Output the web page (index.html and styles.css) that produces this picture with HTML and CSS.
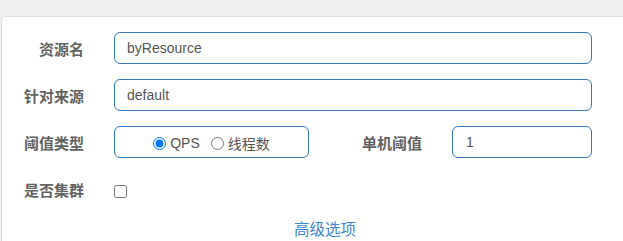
FILE: index.html
```html
<!DOCTYPE html>
<html lang="zh">
<head>
<meta charset="utf-8">
<title>流控规则</title>
<link rel="stylesheet" href="styles.css">
</head>
<body>
<div class="panel">
  <form class="form">
    <div class="row">
      <label class="label">资源名</label>
      <input class="field field-wide" type="text" value="byResource">
    </div>
    <div class="row">
      <label class="label">针对来源</label>
      <input class="field field-wide" type="text" value="default">
    </div>
    <div class="row">
      <label class="label">阈值类型</label>
      <div class="radio-box">
        <label class="radio"><input type="radio" name="grade" checked><span>QPS</span></label>
        <label class="radio"><input type="radio" name="grade"><span>线程数</span></label>
      </div>
      <label class="label label-mid">单机阈值</label>
      <input class="field field-small" type="text" value="1">
    </div>
    <div class="row row-check">
      <label class="label">是否集群</label>
      <input class="check" type="checkbox">
    </div>
    <div class="more"><a class="more-link">高级选项</a></div>
  </form>
</div>
</body>
</html>
```

FILE: styles.css
```css
html, body {
  margin: 0;
  padding: 0;
  height: 100%;
  overflow: hidden;
}
body {
  background: #f0f0f0;
  font-family: "Liberation Sans", Arial, "Noto Sans CJK SC", sans-serif;
}
.panel {
  box-sizing: border-box;
  margin: 16px 0 0 1px;
  background: #fff;
  border-top: 1px solid #dcdcdc;
  border-left: 1px solid #dcdcdc;
  border-top-left-radius: 5px;
  height: calc(100% - 16px);
}
.form {
  padding-top: 15px;
}
.row {
  display: flex;
  align-items: flex-start;
  margin-bottom: 15px;
}
.label {
  width: 82px;
  flex: none;
  text-align: right;
  font-size: 15px;
  line-height: 20px;
  padding-top: 8px;
  font-weight: bold;
  color: #626262;
  font-family: "Liberation Sans", "Noto Sans CJK SC", sans-serif;
}
.field {
  box-sizing: border-box;
  height: 32px;
  border: 1px solid #3477b7;
  border-radius: 6px;
  padding: 0 12px;
  font-family: "Liberation Sans", Arial, sans-serif;
  font-size: 14px;
  color: #555;
  background: #fff;
  outline: none;
  margin: 0 0 0 30px;
}
.field-wide {
  width: 478px;
}
.radio-box {
  box-sizing: border-box;
  width: 195px;
  height: 32px;
  margin-left: 30px;
  border: 1px solid #3477b7;
  border-radius: 6px;
  display: flex;
  align-items: center;
  justify-content: center;
  gap: 11px;
  padding-top: 2px;
}
.radio {
  display: flex;
  align-items: center;
  font-size: 14px;
  color: #555;
  font-family: "Liberation Sans", "Noto Sans CJK SC", sans-serif;
}
.radio input {
  margin: 0 4px 0 0;
  width: 13px;
  height: 13px;
}
.label-mid {
  width: 113px;
}
.field-small {
  width: 140px;
  padding-left: 13px;
}
.row-check {
  margin-top: 1px;
  height: 32px;
}
.check {
  width: 13px;
  height: 13px;
  margin: 12px 0 0 30px;
}
.more {
  padding-left: 292px;
  margin-top: -2px;
}
.more-link {
  font-size: 15.5px;
  line-height: 20px;
  color: #3a86cf;
  font-family: "Noto Sans CJK SC", sans-serif;
  cursor: pointer;
}
```
